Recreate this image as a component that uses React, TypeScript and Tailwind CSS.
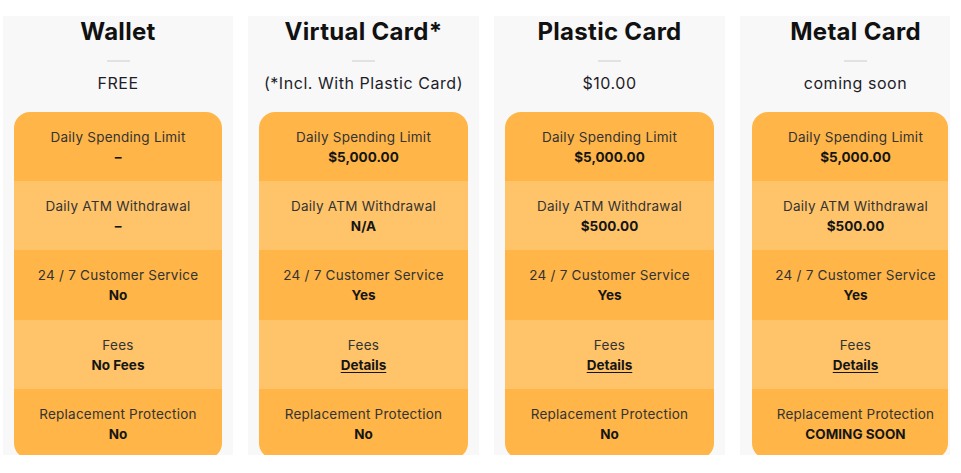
import React from "react";

type Row = { label: string; value: string; link?: boolean };
type Col = { title: string; sub: string; rows: Row[]; w: string; pad: string; shift: string };

const cols: Col[] = [
  {
    title: "Wallet",
    sub: "FREE",
    w: "w-[230px]",
    pad: "px-[11px]",
    shift: "",
    rows: [
      { label: "Daily Spending Limit", value: "–" },
      { label: "Daily ATM Withdrawal", value: "–" },
      { label: "24 / 7 Customer Service", value: "No" },
      { label: "Fees", value: "No Fees" },
      { label: "Replacement Protection", value: "No" },
    ],
  },
  {
    title: "Virtual Card*",
    sub: "(*Incl. With Plastic Card)",
    w: "w-[231px]",
    pad: "px-[11px]",
    shift: "",
    rows: [
      { label: "Daily Spending Limit", value: "$5,000.00" },
      { label: "Daily ATM Withdrawal", value: "N/A" },
      { label: "24 / 7 Customer Service", value: "Yes" },
      { label: "Fees", value: "Details", link: true },
      { label: "Replacement Protection", value: "No" },
    ],
  },
  {
    title: "Plastic Card",
    sub: "$10.00",
    w: "w-[231px]",
    pad: "px-[11px]",
    shift: "",
    rows: [
      { label: "Daily Spending Limit", value: "$5,000.00" },
      { label: "Daily ATM Withdrawal", value: "$500.00" },
      { label: "24 / 7 Customer Service", value: "Yes" },
      { label: "Fees", value: "Details", link: true },
      { label: "Replacement Protection", value: "No" },
    ],
  },
  {
    title: "Metal Card",
    sub: "coming soon",
    w: "w-[210px]",
    pad: "pl-[12px] pr-[2px]",
    shift: "pl-[11px]",
    rows: [
      { label: "Daily Spending Limit", value: "$5,000.00" },
      { label: "Daily ATM Withdrawal", value: "$500.00" },
      { label: "24 / 7 Customer Service", value: "Yes" },
      { label: "Fees", value: "Details", link: true },
      { label: "Replacement Protection", value: "COMING SOON" },
    ],
  },
];

const rowH = ["h-[69px]", "h-[69px]", "h-[70px]", "h-[69px]", "h-[70px]"];

export default function App() {
  return (
    <div
      className="w-[961px] h-[473px] bg-white overflow-hidden pt-[16px] pl-[3px] flex gap-[15px]"
      style={{ fontFamily: "Inter, 'Noto Sans', sans-serif" }}
    >
      {cols.map((c) => (
        <div key={c.title} className={`${c.w} shrink-0 h-[439px] bg-[#f8f8f8] flex flex-col items-center ${c.pad} overflow-hidden`}>
          <div className={`shrink-0 w-full text-center whitespace-nowrap ${c.shift} text-[24px] leading-[32px] font-bold text-[#111] tracking-[0.3px]`}>{c.title}</div>
          <div className={`shrink-0 w-full flex justify-center ${c.shift} mt-[12px]`}>
            <div className="w-[23px] h-[2px] bg-[#e2e2e2]" />
          </div>
          <div className={`shrink-0 w-full text-center whitespace-nowrap ${c.shift} mt-[9px] text-[16px] leading-[24px] text-[#1d1d28] tracking-[0.55px]`}>{c.sub}</div>
          <div className="mt-[17px] w-full shrink-0 rounded-2xl overflow-hidden">
            {c.rows.map((r, i) => (
              <div
                key={r.label}
                className={`${rowH[i]} ${i % 2 === 0 ? "bg-[#ffb547]" : "bg-[#ffc369]"} ${c.shift} flex flex-col items-center justify-center text-center whitespace-nowrap`}
              >
                <div className="text-[13.5px] leading-[20px] text-[#333] tracking-[0.25px]">{r.label}</div>
                <div className={`text-[13.5px] leading-[20px] font-bold text-[#151515] ${r.link ? "underline underline-offset-2" : ""}`}>
                  {r.value}
                </div>
              </div>
            ))}
          </div>
        </div>
      ))}
    </div>
  );
}
